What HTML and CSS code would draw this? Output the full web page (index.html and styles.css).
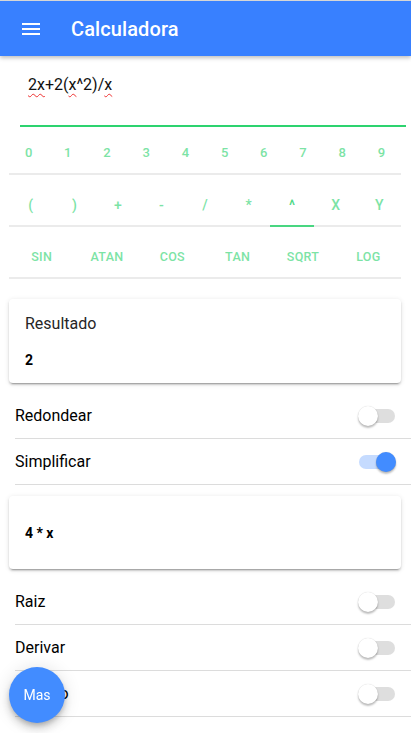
FILE: index.html
```html
<!DOCTYPE html>
<html lang="es">
  <head>
    <meta charset="UTF-8" />
    <meta name="viewport" content="width=device-width, initial-scale=1.0" />
    <title>Calculadora</title>
    <link rel="stylesheet" href="styles.css">
  </head>
  <body>
    <header class="toolbar">
      <button class="menu-btn" aria-label="menu">
        <svg viewBox="0 0 24 24" width="24" height="24">
          <path fill="#fff" d="M3 18h18v-2H3v2zm0-5h18v-2H3v2zm0-7v2h18V6H3z" />
        </svg>
      </button>
      <h1 class="title">Calculadora</h1>
    </header>

    <main class="content">
      <div class="expr">
        <span class="typo">2x</span>+2(<span class="typo">x</span>^2)/<span class="typo">x</span>
      </div>

      <div class="segment seg-digits">
        <button>0</button><button>1</button><button>2</button><button>3</button><button>4</button>
        <button>5</button><button>6</button><button>7</button><button>8</button><button>9</button>
      </div>

      <div class="segment seg-ops">
        <button>(</button><button>)</button><button>+</button><button>-</button><button>/</button>
        <button>*</button><button class="active">^</button><button>X</button><button>Y</button>
      </div>

      <div class="segment seg-funcs">
        <button>SIN</button><button>ATAN</button><button>COS</button>
        <button>TAN</button><button>SQRT</button><button>LOG</button>
      </div>

      <div class="card card-result">
        <div class="card-title">Resultado</div>
        <div class="card-value">2</div>
      </div>

      <ul class="list">
        <li class="item"><span>Redondear</span><span class="toggle"></span></li>
        <li class="item"><span>Simplificar</span><span class="toggle on"></span></li>
      </ul>

      <div class="card card-simple">
        <div class="card-value">4 * x</div>
      </div>

      <ul class="list">
        <li class="item"><span>Raiz</span><span class="toggle"></span></li>
        <li class="item"><span>Derivar</span><span class="toggle"></span></li>
        <li class="item"><span>Minimo</span><span class="toggle"></span></li>
      </ul>
    </main>

    <button class="fab">Mas</button>
  </body>
</html>
```

FILE: styles.css
```css
body {
  margin: 0;
  font-family: Roboto, "Noto Sans", sans-serif;
  background: #fff;
  color: #000;
  overflow: hidden;
}

button {
  font-family: inherit;
  border: none;
  background: none;
  padding: 0;
}

.toolbar {
  display: flex;
  align-items: center;
  height: 55px;
  border-top: 1px solid #d6d6d6;
  background: #3880ff;
  box-shadow: 0 2px 4px rgba(0, 0, 0, 0.25);
  position: relative;
  z-index: 2;
}

.menu-btn {
  display: flex;
  margin-left: 19px;
  width: 24px;
  height: 24px;
}

.title {
  margin: 0 0 0 28px;
  font-size: 20px;
  font-weight: 500;
  color: #fff;
  letter-spacing: 0.1px;
}

.expr {
  margin: 0 5px 0 20px;
  padding: 19px 0 0 8px;
  height: 50px;
  font-size: 16px;
  line-height: 20px;
  color: #111;
  border-bottom: 2px solid #2dd36f;
}

.typo {
  text-decoration: underline wavy #e33;
  text-decoration-thickness: 1px;
  text-underline-offset: 3px;
}

.segment {
  display: grid;
  margin: 0 10px 0 9px;
  border-bottom: 2px solid #ebebeb;
}

.segment button {
  display: flex;
  justify-content: center;
  align-items: center;
  color: #2dd36f;
  opacity: 0.62;
  font-size: 13px;
  font-weight: 500;
}

.seg-digits {
  grid-template-columns: repeat(10, 1fr);
  height: 46px;
}

.seg-digits button {
  padding-top: 4px;
}

.seg-ops {
  grid-template-columns: repeat(9, 1fr);
  height: 50px;
}

.seg-ops button {
  padding-top: 10px;
  font-size: 14px;
}

.seg-ops .active {
  margin-bottom: -2px;
  border-bottom: 2px solid #2dd36f;
  opacity: 0.85;
}

.seg-funcs {
  grid-template-columns: repeat(6, 1fr);
  height: 50px;
}

.seg-funcs button {
  padding-top: 9px;
  font-size: 12.5px;
  letter-spacing: 0.3px;
}

.card {
  margin: 20px 10px 0 9px;
  border-radius: 4px;
  box-shadow: 0 3px 1px -2px rgba(0, 0, 0, 0.2), 0 2px 2px 0 rgba(0, 0, 0, 0.14), 0 1px 5px 0 rgba(0, 0, 0, 0.12);
  padding: 0 16px;
}

.card-result {
  height: 84px;
}

.card-title {
  padding-top: 15px;
  font-size: 16px;
  line-height: 20px;
  color: #262626;
}

.card-value {
  font-size: 14px;
  font-weight: 700;
  color: #000;
}

.card-result .card-value {
  margin-top: 18px;
}

.card-simple {
  margin-top: 11px;
  height: 73px;
  display: flex;
  align-items: center;
}

.list {
  list-style: none;
  margin: 10px 0 0 15px;
  padding: 0;
}

.item {
  display: flex;
  align-items: center;
  justify-content: space-between;
  height: 45px;
  padding-right: 16px;
  border-bottom: 1px solid #dcdcdc;
  font-size: 16px;
}

.toggle {
  position: relative;
  width: 36px;
  height: 14px;
  border-radius: 7px;
  background: #dedede;
}

.toggle::after {
  content: "";
  position: absolute;
  left: -1px;
  top: -3px;
  width: 20px;
  height: 20px;
  border-radius: 50%;
  background: #fff;
  box-shadow: 0 2px 2px rgba(0, 0, 0, 0.25), 0 0 1px rgba(0, 0, 0, 0.2);
}

.toggle.on {
  background: #c5dbff;
}

.toggle.on::after {
  left: 17px;
  background: #428cff;
}

.fab {
  position: fixed;
  left: 9px;
  bottom: 10px;
  width: 56px;
  height: 56px;
  border-radius: 50%;
  background: #428cff;
  color: #fff;
  font-size: 14px;
  box-shadow: 0 3px 5px -1px rgba(0, 0, 0, 0.2), 0 6px 10px 0 rgba(0, 0, 0, 0.14), 0 1px 18px 0 rgba(0, 0, 0, 0.12);
  z-index: 3;
}
```
